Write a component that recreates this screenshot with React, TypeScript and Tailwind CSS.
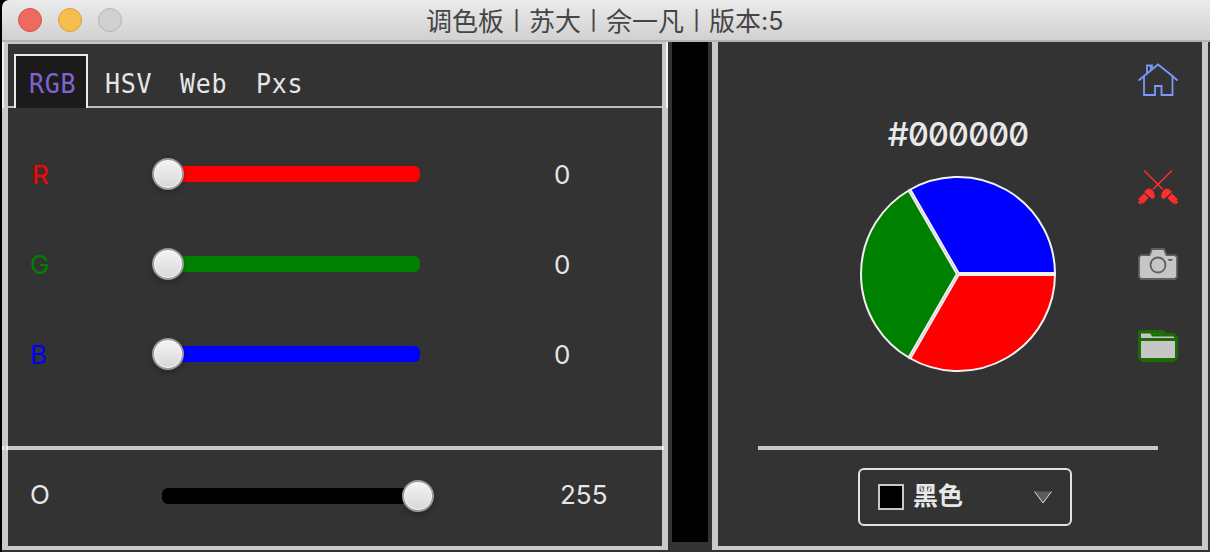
import React from 'react';

type Channel = { label: string; text: string; bar: string; pad: string };

const channels: Channel[] = [
  { label: 'R', text: 'text-[#ff0000]', bar: 'bg-[#ff0000]', pad: 'pl-[24px]' },
  { label: 'G', text: 'text-[#008000]', bar: 'bg-[#008000]', pad: 'pl-[22px]' },
  { label: 'B', text: 'text-[#0000ff]', bar: 'bg-[#0000ff]', pad: 'pl-[22px]' },
];

function Thumb({ side }: { side: string }) {
  return (
    <div
      className={`absolute -top-2 size-8 rounded-full border-2 border-[#9b9b9b] bg-linear-to-b from-[#f4f4f4] to-[#d8d8d8] shadow-[0_3px_6px_rgba(0,0,0,0.25),inset_0_0_1px_1px_rgba(255,255,255,0.7)] ${side}`}
    />
  );
}

function ChannelRow({ label, text, bar, pad }: Channel) {
  return (
    <div className="flex h-[90px] items-center">
      <div className={`w-[154px] pt-[2px] text-[26px] leading-8 ${pad} ${text}`}>{label}</div>
      <div className={`relative h-4 w-[258px] rounded-md ${bar}`}>
        <Thumb side="-left-[10px]" />
      </div>
      <div className="ml-[134px] pt-[2px] text-[26px] leading-8 text-[#e6e6e6]">0</div>
    </div>
  );
}

function HomeIcon() {
  return (
    <svg width="40" height="34" viewBox="0 0 40 34" fill="none" stroke="#7c98f8" strokeWidth="1.8">
      <path d="M0.5 17.5 L5.5 13.5 L20 1.5 L34.5 13 L39.5 17.5" />
      <path d="M6 13 V32 H17 V23 H23.5 V32 H34.5 V13" />
      <path d="M9 11 V2.5 H14 V6" />
      <path d="M12.5 3 V8" strokeWidth="1" />
    </svg>
  );
}

function Sword() {
  return (
    <>
      <path d="M34 0.5 L15 19.5" strokeWidth="1.5" />
      <path d="M6.5 22 Q9 18.5 12 19 Q16.5 21 16.2 27.5 L14 28.5 Z" fill="#ff2e2e" strokeWidth="1" />
      <path d="M8.8 25.2 L2.5 31.5" strokeWidth="6.5" />
      <path d="M0.5 31.2 L3 33.7" strokeWidth="2.2" />
      <path d="M6 23 L13 30" stroke="#333333" strokeWidth="0.9" />
    </>
  );
}

function SwordsIcon() {
  return (
    <svg width="40" height="36" viewBox="0 0 40 36" fill="none" stroke="#ff2e2e">
      <Sword />
      <g transform="matrix(-1 0 0 1 40 0)">
        <Sword />
      </g>
    </svg>
  );
}

function CameraIcon() {
  return (
    <svg width="40" height="32" viewBox="0 0 40 32" fill="#c6c6c6" stroke="#5f5f5f" strokeWidth="1.8">
      <path d="M3 7.2 H11.5 L14 1 H26 L28.5 7.2 H37 L39 9 V29 L37 31 H3 L1 29 V9 Z" />
      <circle cx="20" cy="17" r="7.5" />
      <path d="M29.5 11 H35 L33.5 13 H31 Z" fill="#5f5f5f" stroke="none" />
    </svg>
  );
}

function FolderIcon() {
  return (
    <svg width="40" height="32" viewBox="0 0 40 32">
      <path d="M2 0 H25.5 L28 3 H36 L40 6.5 V28 L36 32 H4 L0 28 V2 Z" fill="#1c6b04" />
      <path d="M3 3.5 H12.5 L14 6.5 H35.5 L36.5 8 H3 Z" fill="#c6c6c6" />
      <path d="M3 11 H37 V28 H3 Z" fill="#c6c6c6" />
      <path d="M15 3.8 H25" stroke="#3b7b29" strokeDasharray="3 2" />
    </svg>
  );
}

function Wheel() {
  return (
    <svg width="196" height="196" viewBox="-98 -98 196 196" stroke="#f2f2f2" strokeWidth="2">
      <path d="M0 0 H97 A97 97 0 0 1 -48.5 84 Z" fill="#ff0000" />
      <path d="M0 0 L-48.5 84 A97 97 0 0 1 -48.5 -84 Z" fill="#008000" />
      <path d="M0 0 L-48.5 -84 A97 97 0 0 1 97 0 Z" fill="#0000ff" />
      <path d="M0 0 H97 M0 0 L-48.5 84 M0 0 L-48.5 -84" strokeWidth="4" />
      <path d="M0 0 L-48.5 84 M0 0 L-48.5 -84" stroke="#c4c4c4" strokeWidth="0.8" />
    </svg>
  );
}

function Bar() {
  return <span className="w-[25px] pt-[2px] text-center font-['Inter',sans-serif] text-[19px] leading-[38px] font-medium">|</span>;
}

function TitleBar() {
  return (
    <header className="flex h-[42px] shrink-0 bg-black pl-[2px]">
      <div className="grid flex-1 grid-cols-[424px_1fr] rounded-tl-[7px] border-b-2 border-[#b3b3b3] bg-linear-to-b from-[#ebebeb] to-[#d1d1d1]">
        <div className="flex gap-4 pt-2 pl-4">
          <div className="size-6 rounded-full border border-[#d75348] bg-[#ee6a5e]" />
          <div className="size-6 rounded-full border border-[#d9a03c] bg-[#f6be4f]" />
          <div className="size-6 rounded-full border border-[#b5b5b5] bg-[#d0d0d0]" />
        </div>
        <h1 className="flex font-['Noto_Sans_CJK_SC',sans-serif] text-[26px] leading-10 whitespace-pre text-[#454545]">
          <span>调色板</span>
          <Bar />
          <span>苏大</span>
          <Bar />
          <span>佘一凡</span>
          <Bar />
          <span>版本</span>
          <span className="pt-px font-['Inter',sans-serif] text-[25px] [font-feature-settings:'calt'_0]">:5</span>
        </h1>
      </div>
    </header>
  );
}

function LeftPanel() {
  return (
    <section className="flex w-[666px] flex-col border-x-[6px] border-[#c9c9c9]">
      <div className="-mx-[6px] flex h-[66px]">
        <div className="w-[2px] bg-[#f0f0f0]" />
        <div className="w-1 bg-[#c9c9c9]" />
        <nav className="flex flex-1 border-t-2 border-b-2 border-t-[#c9c9c9] border-b-[#bdbdbd] pt-[10px] pl-[6px] font-['DejaVu_Sans_Mono',monospace] text-[25px] leading-[54px] tracking-[0.7px] text-[#e6e6e6]">
          <div className="h-[54px] w-[74px] border-2 border-b-0 border-[#ebebeb] bg-[#1b1b1b] pt-[2px] pl-[13px] text-[#8063d2]">
            <span className="block scale-y-105">RGB</span>
          </div>
          <div className="w-[76px] pt-1 pl-[17px]"><span className="block scale-y-105">HSV</span></div>
          <div className="w-[76px] pt-1 pl-4"><span className="block scale-y-105">Web</span></div>
          <div className="w-[76px] pt-1 pl-4"><span className="block scale-y-105">Pxs</span></div>
        </nav>
        <div className="w-1 bg-[#c9c9c9]" />
        <div className="w-[2px] bg-[#f5f5f5]" />
      </div>
      <div className="h-[338px] pt-[21px]">
        {channels.map((c) => (
          <ChannelRow key={c.label} {...c} />
        ))}
      </div>
      <div className="-mx-[6px] flex h-1">
        <div className="w-[2px] bg-[#f2f2f2]" />
        <div className="w-[2px] bg-[#c9c9c9]" />
        <div className="w-[2px] bg-[#f2f2f2]" />
        <div className="flex-1 bg-[#c9cbc9]" />
        <div className="w-[2px] bg-[#f2f2f2]" />
        <div className="w-1 bg-[#c9c9c9]" />
      </div>
      <div className="flex h-24 items-center">
        <div className="w-[154px] pb-[6px] pl-[22px] text-[26px] leading-8 text-[#e6e6e6]">O</div>
        <div className="relative top-[-2px] h-4 w-[258px] rounded-md bg-black">
          <Thumb side="-right-[14px]" />
        </div>
        <div className="ml-[140px] pb-[6px] text-[26px] leading-8 text-[#e6e6e6]">255</div>
      </div>
      <div className="h-1 bg-[#c9cbc9]" />
    </section>
  );
}

function RightPanel() {
  return (
    <section className="flex w-[496px] flex-col border-x-[6px] border-b-4 border-[#c9c9c9]">
      <div className="flex h-[404px]">
        <div className="flex w-[400px] flex-col items-center pt-[71px] pl-20">
          <div className="h-[63px] text-[33px] leading-[42px] font-medium tracking-[-1.3px] text-[#e8e8e8] [font-feature-settings:'zero','tnum']">#000000</div>
          <Wheel />
        </div>
        <div className="flex flex-col pt-[21px] pl-5">
          <HomeIcon />
          <div className="mt-[73px]"><SwordsIcon /></div>
          <div className="mt-[42px]"><CameraIcon /></div>
          <div className="mt-[50px]"><FolderIcon /></div>
        </div>
      </div>
      <div className="ml-10 h-1 w-[400px] bg-[#c9cbc9]" />
      <div className="mt-[18px] ml-[140px] flex h-[58px] w-[214px] items-center rounded-md border-2 border-[#e3e3e3] pl-[18px]">
        <div className="size-[26px] border-2 border-[#c9c9c9] bg-black" />
        <div className="ml-[9px] w-[121px] pb-[6px] font-['Noto_Sans_CJK_SC',sans-serif] text-[25px] leading-[48px] font-bold text-[#e8e8e8]">黑色</div>
        <svg width="18" height="13" viewBox="0 0 18 13">
          <path d="M0.5 0.5 H17.5 L9 12 Z" fill="#5c5c5c" />
          <path d="M0.5 0.5 L9 12 L17.5 0.5" fill="none" stroke="#dddddd" strokeWidth="1" />
        </svg>
      </div>
    </section>
  );
}

export default function App() {
  return (
    <div className="flex h-[552px] w-[1210px] flex-col overflow-hidden bg-[#333333] font-['Inter',sans-serif]">
      <TitleBar />
      <main className="flex h-[510px] border-l-2 border-black">
        <div className="flex h-[508px]">
          <LeftPanel />
          <div className="h-[500px] w-11 px-1">
            <div className="h-full bg-black" />
          </div>
          <RightPanel />
        </div>
      </main>
    </div>
  );
}
